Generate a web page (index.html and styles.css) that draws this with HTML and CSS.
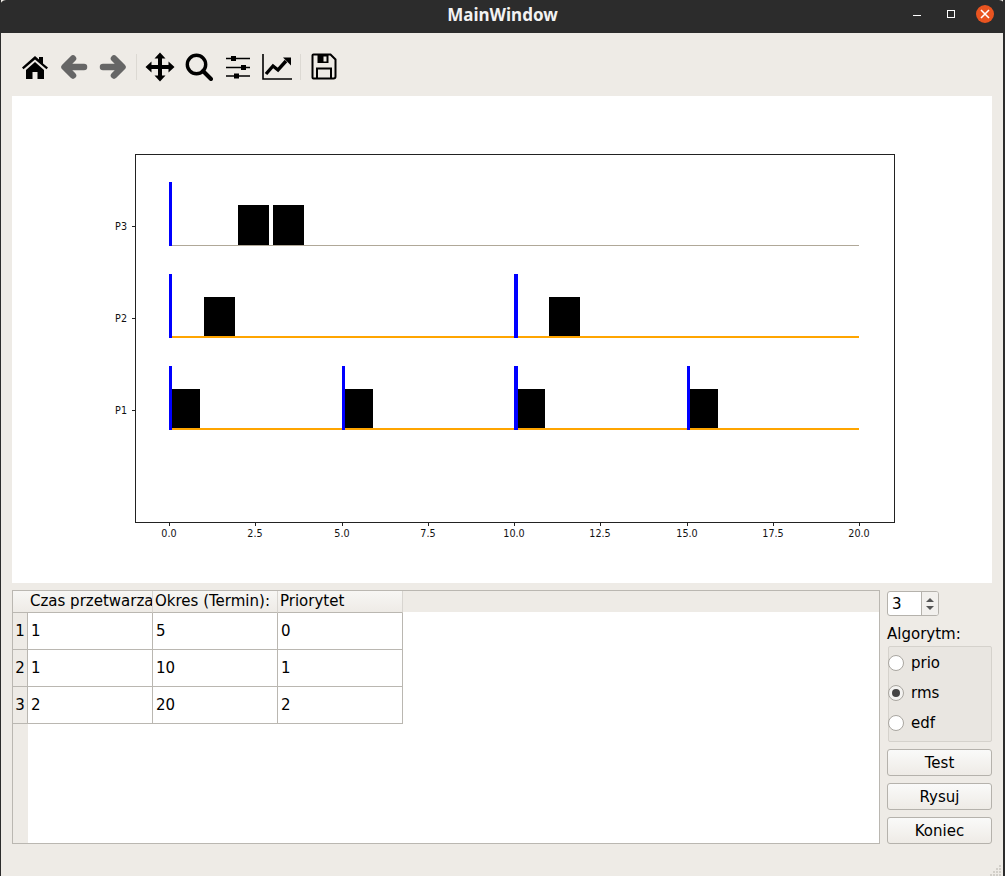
FILE: index.html
```html
<!DOCTYPE html>
<html lang="en">
  <head>
    <meta charset="UTF-8" />
    <meta name="viewport" content="width=device-width, initial-scale=1.0" />
    <title>MainWindow</title>
    <link rel="stylesheet" href="styles.css">
  </head>
  <body>
    <div class="window">
      <header class="titlebar">
        <span class="title">MainWindow</span>
        <div class="window-controls">
          <span class="ctl-min"></span>
          <span class="ctl-max"></span>
          <span class="ctl-close">
            <svg width="10" height="10" viewBox="0 0 10 10"><path d="M1 1L9 9M9 1L1 9" stroke="#fff" stroke-width="1.6"/></svg>
          </span>
        </div>
      </header>

      <div class="toolbar">
        <button class="tool">
          <svg width="28" height="28" viewBox="0 0 28 28"><path d="M1 14.500L14 3l4 3.500V4h4v6.500l5 4-1.500 1.700L14 6.500 2.500 16.200z"/><path d="M5 17L14 9l9 8v9h-6.500v-7h-5v7H5z"/></svg>
        </button>
        <button class="tool">
          <svg width="28" height="28" viewBox="0 0 28 28"><path class="arrow" d="M24 14H5M13 5.500L4.500 14l8.500 8.500"/></svg>
        </button>
        <button class="tool">
          <svg width="28" height="28" viewBox="0 0 28 28"><path class="arrow" d="M4 14h19M15 5.500L23.500 14 15 22.500"/></svg>
        </button>
        <span class="tool-sep"></span>
        <button class="tool">
          <svg width="30" height="30" viewBox="0 0 30 30"><path d="M15 0.500l5.500 6h-3.500v6.500h6.500V9.500l6 5.500-6 5.500V17H17v6.500h3.500l-5.500 6-5.500-6H13V17H6.500v3.500L0.500 15l6-5.500V13H13V6.500H9.500z"/></svg>
        </button>
        <button class="tool">
          <svg width="28" height="28" viewBox="0 0 28 28"><circle cx="11.500" cy="11.500" r="9.200" fill="none" stroke="#000" stroke-width="3.400"/><path d="M18 18l8 8" stroke="#000" stroke-width="4" stroke-linecap="round"/></svg>
        </button>
        <button class="tool">
          <svg width="26" height="26" viewBox="0 0 26 26"><path d="M1 4.500h5M11 4.500h14M1 13.500h15M21 13.500h4M1 22h8M14 22h11" stroke="#000" stroke-width="1.600"/><rect x="6" y="2" width="5" height="5"/><rect x="16" y="11" width="5" height="5"/><rect x="9" y="19.500" width="5" height="5"/></svg>
        </button>
        <button class="tool">
          <svg width="30" height="28" viewBox="0 0 30 28"><path d="M1 1v25h29" fill="none" stroke="#000" stroke-width="1.600"/><path d="M4 21l7-8 5 4 8-9" fill="none" stroke="#000" stroke-width="3.400"/><path d="M21 4.500h8v8z"/></svg>
        </button>
        <span class="tool-sep"></span>
        <button class="tool">
          <svg width="26" height="27" viewBox="0 0 26 27"><path d="M2.500 1.500h17l5 5v17a2 2 0 0 1-2 2h-20a1 1 0 0 1-1-1v-22a1 1 0 0 1 1-1z" fill="none" stroke="#000" stroke-width="2"/><path d="M6.500 2h11v8h-11z"/><rect x="12.500" y="3.500" width="3" height="5" fill="#eeebe6"/><path d="M6 25v-9.500h14V25" fill="none" stroke="#000" stroke-width="2"/></svg>
        </button>
      </div>

      <div class="canvas">
        <svg class="plot" width="980" height="487" viewBox="12 96 980 487">
          <rect x="135.500" y="154.500" width="759" height="368" fill="none" stroke="#222" stroke-width="1"/>

          <g stroke="#222" stroke-width="1">
            <path d="M132 226.500h3M132 318.500h3M132 410.500h3"/>
            <path d="M169.500 523v3M255.500 523v3M342.500 523v3M428.500 523v3M514.500 523v3M600.500 523v3M687.500 523v3M773.500 523v3M859.500 523v3"/>
          </g>
          <g class="tick-y">
            <text x="127" y="230">P3</text>
            <text x="127" y="322">P2</text>
            <text x="127" y="414">P1</text>
          </g>
          <g class="tick-x">
            <text x="169" y="537">0.0</text>
            <text x="255" y="537">2.5</text>
            <text x="342" y="537">5.0</text>
            <text x="428" y="537">7.5</text>
            <text x="514" y="537">10.0</text>
            <text x="600" y="537">12.5</text>
            <text x="687" y="537">15.0</text>
            <text x="773" y="537">17.5</text>
            <text x="859" y="537">20.0</text>
          </g>

          <!-- P3 -->
          <rect x="238" y="205" width="31" height="40"/>
          <rect x="273" y="205" width="31" height="40"/>
          <rect x="169" y="245" width="690" height="1" fill="#b0a898"/>
          <rect x="169" y="182" width="3" height="64" fill="#0000ff"/>

          <!-- P2 -->
          <rect x="204" y="297" width="31" height="39"/>
          <rect x="549" y="297" width="31" height="39"/>
          <rect x="169" y="336" width="690" height="2" fill="#ffa500"/>
          <rect x="169" y="274" width="3" height="64" fill="#0000ff"/>
          <rect x="514" y="274" width="4" height="64" fill="#0000ff"/>

          <!-- P1 -->
          <rect x="172" y="389" width="28" height="39"/>
          <rect x="345" y="389" width="28" height="39"/>
          <rect x="517" y="389" width="28" height="39"/>
          <rect x="690" y="389" width="28" height="39"/>
          <rect x="169" y="428" width="690" height="2" fill="#ffa500"/>
          <rect x="169" y="366" width="3" height="64" fill="#0000ff"/>
          <rect x="342" y="366" width="3" height="64" fill="#0000ff"/>
          <rect x="514" y="366" width="4" height="64" fill="#0000ff"/>
          <rect x="687" y="366" width="3" height="64" fill="#0000ff"/>
        </svg>
      </div>

      <div class="bottom">
        <div class="table-frame">
          <div class="table-grid">
            <div class="corner"></div>
            <div class="col-head">Czas przetwarza</div>
            <div class="col-head">Okres (Termin):</div>
            <div class="col-head">Priorytet</div>

            <div class="row-head">1</div>
            <div class="cell">1</div>
            <div class="cell">5</div>
            <div class="cell">0</div>

            <div class="row-head">2</div>
            <div class="cell">1</div>
            <div class="cell">10</div>
            <div class="cell">1</div>

            <div class="row-head">3</div>
            <div class="cell">2</div>
            <div class="cell">20</div>
            <div class="cell">2</div>
          </div>
        </div>

        <div class="side">
          <div class="spin">
            <span class="spin-value">3</span>
            <div class="spin-buttons">
              <span class="spin-up"></span>
              <span class="spin-down"></span>
            </div>
          </div>
          <div class="algo-label">Algorytm:</div>
          <div class="algo-group">
            <label class="radio"><span class="radio-dot"></span>prio</label>
            <label class="radio"><span class="radio-dot checked"></span>rms</label>
            <label class="radio"><span class="radio-dot"></span>edf</label>
          </div>
          <button class="push">Test</button>
          <button class="push">Rysuj</button>
          <button class="push">Koniec</button>
        </div>
      </div>

      <svg class="grip" width="12" height="11" viewBox="0 0 12 11">
        <path d="M9 0h2v2H9zM6 3h2v2H6zM9 3h2v2H9zM3 6h2v2H3zM6 6h2v2H6zM9 6h2v2H9zM0 9h2v2H0zM3 9h2v2H3zM6 9h2v2H6zM9 9h2v2H9z" fill="#d2cfc9"/>
      </svg>
    </div>
  </body>
</html>
```

FILE: styles.css
```css
* {
  box-sizing: border-box;
}

html,
body {
  margin: 0;
  height: 100%;
  background-color: #2c2c2c;
}

body {
  font-family: "DejaVu Sans", sans-serif;
  font-size: 15px;
  color: #000;
  overflow: hidden;
}

.window {
  width: 1002px;
  height: 876px;
  margin-left: 1px;
  background-color: #eeebe6;
  display: flex;
  flex-direction: column;
  position: relative;
}

/* title bar */
.titlebar {
  height: 33px;
  flex: none;
  margin-left: -1px;
  width: 1005px;
  background-color: #2c2c2c;
  border-radius: 6px 6px 0 0;
  display: flex;
  align-items: center;
  justify-content: center;
  padding-bottom: 4px;
  position: relative;
}

.title {
  font-family: "Noto Sans", sans-serif;
  font-weight: 700;
  font-size: 17px;
  color: #f2f2f2;
}

.window-controls {
  position: absolute;
  right: 0;
  top: 0;
  height: 28px;
  display: flex;
  align-items: center;
}

.ctl-min {
  width: 8px;
  height: 1px;
  background-color: #fff;
  margin-top: 3px;
  margin-right: 26px;
}

.ctl-max {
  width: 8px;
  height: 8px;
  border: 1px solid #fff;
  margin-right: 21px;
}

.ctl-close {
  width: 18px;
  height: 18px;
  border-radius: 50%;
  background-color: #e95420;
  margin-right: 11px;
  display: flex;
  align-items: center;
  justify-content: center;
}

/* toolbar */
.toolbar {
  height: 63px;
  flex: none;
  padding: 4px 0 0 14px;
  display: flex;
  align-items: center;
}

.tool {
  width: 39px;
  height: 32px;
  padding: 0;
  border: none;
  background: none;
  display: flex;
  align-items: center;
  justify-content: center;
}

.arrow {
  fill: none;
  stroke: #666;
  stroke-width: 6.5;
  stroke-linecap: round;
  stroke-linejoin: round;
}

.tool-sep {
  width: 1px;
  height: 26px;
  margin: 0 3px 0 4px;
  background-color: #dcd9d3;
}

/* plot */
.canvas {
  flex: none;
  margin-left: 11px;
  width: 980px;
  height: 487px;
  background-color: #fff;
}

.plot {
  display: block;
}

.plot text {
  font-family: "DejaVu Sans", sans-serif;
  font-size: 9.6px;
  fill: #111;
}

.tick-y text {
  text-anchor: end;
}

.tick-x text {
  text-anchor: middle;
}

/* bottom area */
.bottom {
  flex: none;
  margin: 7px 0 0 11px;
  display: flex;
  gap: 7px;
}

.table-frame {
  width: 868px;
  height: 254px;
  border: 1px solid #bab7b1;
  background: linear-gradient(#eeebe6, #eeebe6) left top / 15px 100% no-repeat, #fff;
  position: relative;
  overflow: hidden;
}

.table-frame::before {
  content: "";
  position: absolute;
  left: 0;
  right: 0;
  top: 0;
  height: 21px;
  background-color: #eeebe6;
}

.table-grid {
  position: relative;
  display: grid;
  grid-template-columns: 15px 125px 125px 125px;
  grid-template-rows: 22px 37px 37px 37px;
}

.corner,
.col-head {
  background: linear-gradient(#f7f6f4, #eeebe6);
  border-bottom: 1px solid #bab7b1;
}

.col-head {
  border-right: 1px solid #d8d5d0;
  padding: 0 0 0 2px;
  line-height: 21px;
  white-space: nowrap;
  overflow: hidden;
}

.row-head {
  background-color: #eeebe6;
  border-bottom: 1px solid #bab7b1;
  border-right: 1px solid #bab7b1;
  display: flex;
  align-items: center;
  justify-content: center;
}

.cell {
  background-color: #fff;
  border-bottom: 1px solid #bab7b1;
  border-right: 1px solid #bab7b1;
  padding-left: 3px;
  display: flex;
  align-items: center;
}

/* right column */
.side {
  width: 105px;
  display: flex;
  flex-direction: column;
  align-items: stretch;
}

.spin {
  width: 52px;
  height: 25px;
  margin-top: 1px;
  border: 1px solid #b5b2ac;
  border-radius: 3px;
  background-color: #fff;
  display: flex;
  align-items: center;
  justify-content: space-between;
}

.spin-value {
  padding-left: 4px;
}

.spin-buttons {
  width: 17px;
  height: 100%;
  border-left: 1px solid #b5b2ac;
  background-color: #f2f0ed;
  border-radius: 0 2px 2px 0;
  display: flex;
  flex-direction: column;
  align-items: center;
  justify-content: center;
  gap: 4px;
}

.spin-up {
  border: 4px solid transparent;
  border-top: none;
  border-bottom: 4px solid #555;
}

.spin-down {
  border: 4px solid transparent;
  border-bottom: none;
  border-top: 4px solid #555;
}

.algo-label {
  margin-top: 8px;
  height: 22px;
  line-height: 20px;
}

.algo-group {
  height: 96px;
  margin-left: 1px;
  margin-bottom: 7px;
  padding-top: 8px;
  border: 1px solid #d5d2cc;
  border-radius: 2px;
  background-color: #e9e6e1;
  display: flex;
  flex-direction: column;
  gap: 14px;
}

.radio {
  height: 16px;
  display: flex;
  align-items: center;
  gap: 7px;
}

.radio-dot {
  width: 16px;
  height: 16px;
  margin-left: -1px;
  border: 1px solid #a9a6a0;
  border-radius: 50%;
  background-color: #fff;
  display: flex;
  align-items: center;
  justify-content: center;
}

.radio-dot.checked {
  background-color: #f4f3f1;
}

.radio-dot.checked::after {
  content: "";
  width: 8px;
  height: 8px;
  border-radius: 50%;
  background-color: #444;
}

.push {
  height: 27px;
  margin-bottom: 7px;
  padding: 0;
  border: 1px solid #b5b2ac;
  border-radius: 3px;
  background: linear-gradient(#fafaf9, #eeebe6);
  font-family: "DejaVu Sans", sans-serif;
  font-size: 15px;
  color: #000;
}

.grip {
  position: absolute;
  right: 1px;
  bottom: 0;
}
```
